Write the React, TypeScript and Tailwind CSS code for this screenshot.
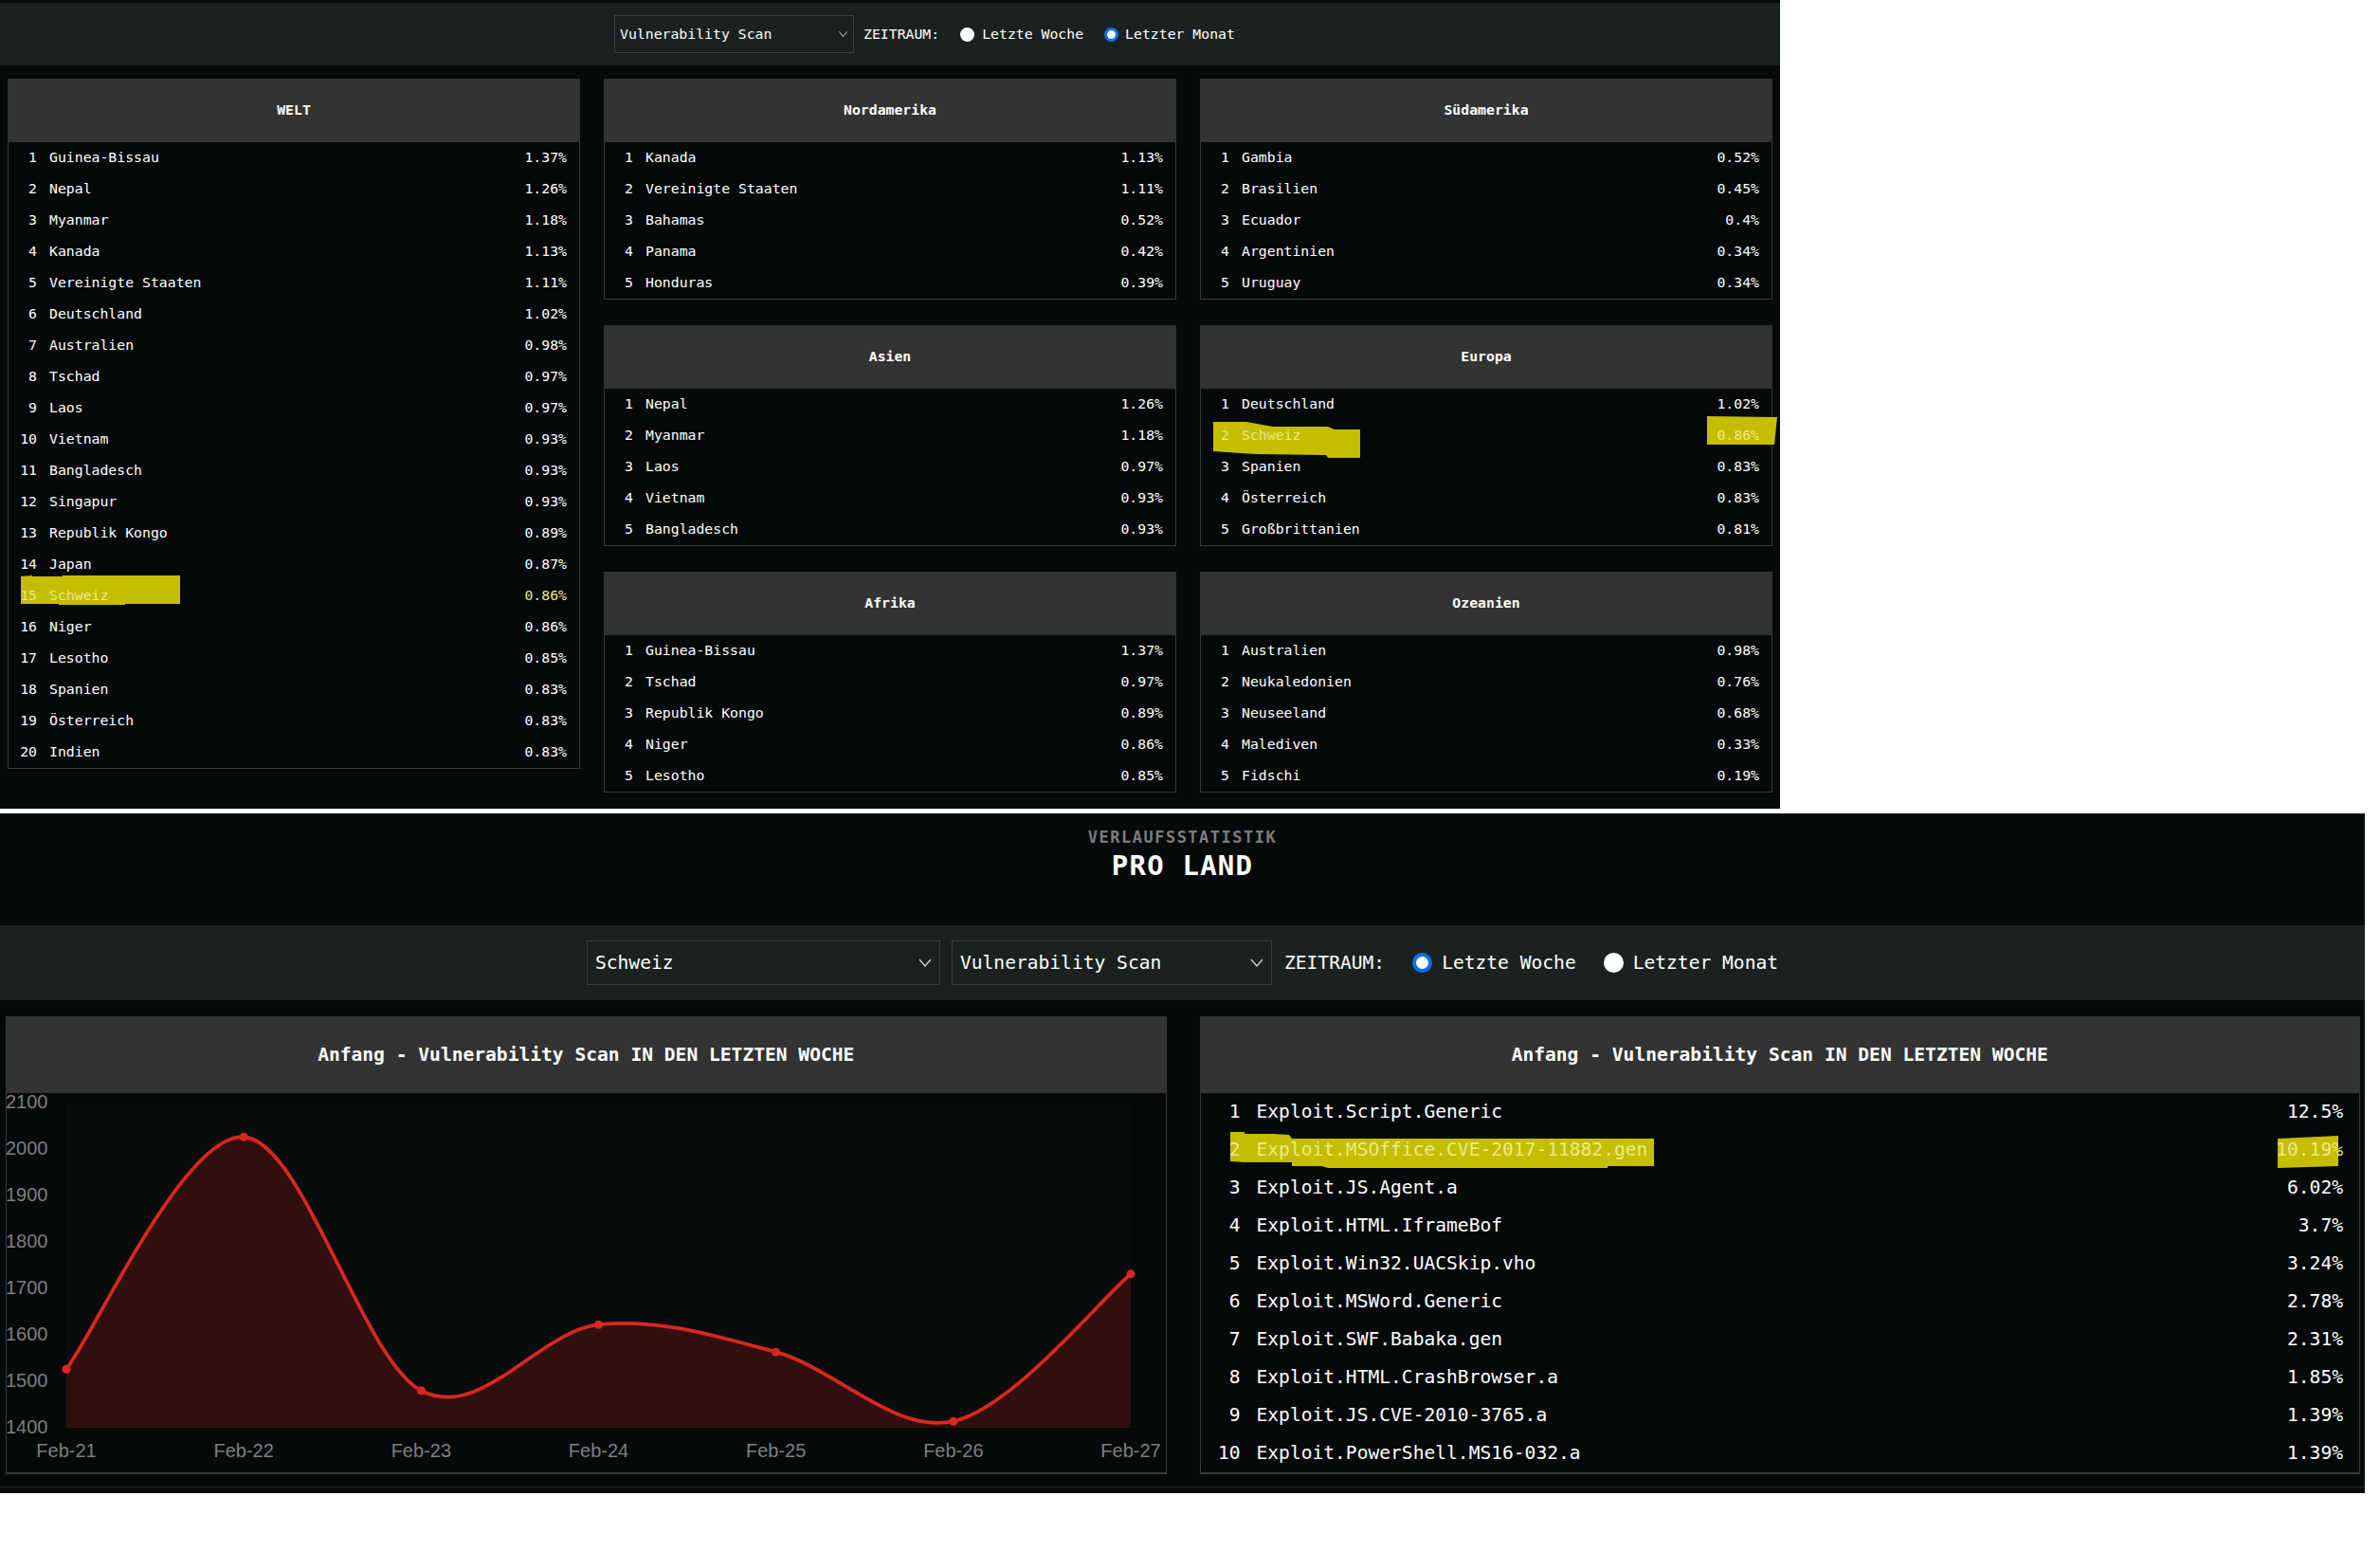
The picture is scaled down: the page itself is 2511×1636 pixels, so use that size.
import React from 'react';

type Row = [string, string];

const welt: Row[] = [
    ['Guinea-Bissau', '1.37%'],
    ['Nepal', '1.26%'],
    ['Myanmar', '1.18%'],
    ['Kanada', '1.13%'],
    ['Vereinigte Staaten', '1.11%'],
    ['Deutschland', '1.02%'],
    ['Australien', '0.98%'],
    ['Tschad', '0.97%'],
    ['Laos', '0.97%'],
    ['Vietnam', '0.93%'],
    ['Bangladesch', '0.93%'],
    ['Singapur', '0.93%'],
    ['Republik Kongo', '0.89%'],
    ['Japan', '0.87%'],
    ['Schweiz', '0.86%'],
    ['Niger', '0.86%'],
    ['Lesotho', '0.85%'],
    ['Spanien', '0.83%'],
    ['Österreich', '0.83%'],
    ['Indien', '0.83%'],
];

const columns: { title: string; rows: Row[] }[][] = [
    [
        { title: 'Nordamerika', rows: [['Kanada', '1.13%'], ['Vereinigte Staaten', '1.11%'], ['Bahamas', '0.52%'], ['Panama', '0.42%'], ['Honduras', '0.39%']] },
        { title: 'Asien', rows: [['Nepal', '1.26%'], ['Myanmar', '1.18%'], ['Laos', '0.97%'], ['Vietnam', '0.93%'], ['Bangladesch', '0.93%']] },
        { title: 'Afrika', rows: [['Guinea-Bissau', '1.37%'], ['Tschad', '0.97%'], ['Republik Kongo', '0.89%'], ['Niger', '0.86%'], ['Lesotho', '0.85%']] },
    ],
    [
        { title: 'Südamerika', rows: [['Gambia', '0.52%'], ['Brasilien', '0.45%'], ['Ecuador', '0.4%'], ['Argentinien', '0.34%'], ['Uruguay', '0.34%']] },
        { title: 'Europa', rows: [['Deutschland', '1.02%'], ['Schweiz', '0.86%'], ['Spanien', '0.83%'], ['Österreich', '0.83%'], ['Großbrittanien', '0.81%']] },
        { title: 'Ozeanien', rows: [['Australien', '0.98%'], ['Neukaledonien', '0.76%'], ['Neuseeland', '0.68%'], ['Malediven', '0.33%'], ['Fidschi', '0.19%']] },
    ],
];

const exploits: Row[] = [
    ['Exploit.Script.Generic', '12.5%'],
    ['Exploit.MSOffice.CVE-2017-11882.gen', '10.19%'],
    ['Exploit.JS.Agent.a', '6.02%'],
    ['Exploit.HTML.IframeBof', '3.7%'],
    ['Exploit.Win32.UACSkip.vho', '3.24%'],
    ['Exploit.MSWord.Generic', '2.78%'],
    ['Exploit.SWF.Babaka.gen', '2.31%'],
    ['Exploit.HTML.CrashBrowser.a', '1.85%'],
    ['Exploit.JS.CVE-2010-3765.a', '1.39%'],
    ['Exploit.PowerShell.MS16-032.a', '1.39%'],
];

const chartValues = [1526, 2026, 1480, 1622, 1563, 1414, 1731];
const chartLabels = ['Feb-21', 'Feb-22', 'Feb-23', 'Feb-24', 'Feb-25', 'Feb-26', 'Feb-27'];

const MARK = '#c5bd00';

const Chevron = ({ big }: { big?: boolean }) =>
    big ? (
        <svg width="14" height="9" viewBox="0 0 14 9">
            <polyline points="1,1 7,8 13,1" fill="none" stroke="#d8d8d8" strokeWidth="1.3" />
        </svg>
    ) : (
        <svg width="9" height="6" viewBox="0 0 9 6">
            <polyline points="0.5,0.5 4.5,5.5 8.5,0.5" fill="none" stroke="#d8d8d8" strokeWidth="1" />
        </svg>
    );

const Radio = ({ checked, big }: { checked: boolean; big?: boolean }) => {
    if (big) {
        return checked ? (
            <span className="inline-block w-[21px] h-[21px] rounded-full bg-white border-[4px] border-[#0b6ef2]" />
        ) : (
            <span className="inline-block w-[21px] h-[21px] rounded-full bg-white" />
        );
    }
    return checked ? (
        <span className="inline-block w-[15px] h-[15px] rounded-full bg-white border-[3px] border-[#0b6ef2]" />
    ) : (
        <span className="inline-block w-[15px] h-[15px] rounded-full bg-white" />
    );
};

// small card of the top dashboard
const RegionCard = ({ title, rows, mark }: { title: string; rows: Row[]; mark?: number }) => (
    <div className="border-x border-b border-[#3a3a3a] bg-[#050909]">
        <div className="h-[67px] -mx-px bg-[#333333] flex items-center justify-center font-bold text-white">{title}</div>
        {rows.map(([name, pct], i) => (
            <div key={name} className="relative h-[33px] flex items-center pr-[13px]">
                {mark === i && title === 'WELT' && (
                    <svg className="absolute left-[13px] top-[-5px] overflow-visible" width="168" height="32">
                        <polygon points="0,1 12,0 12,1 44,1 44,0 168,0 168,30 110,30 110,31 40,31 40,30 0,30" fill={MARK} />
                    </svg>
                )}
                {mark === i && title !== 'WELT' && (
                    <svg className="absolute left-0 top-0 overflow-visible" width="604" height="33">
                        <polygon points="13,2 48,2 76,7 134,7 141,10 168,10 168,40 134,40 132,37 59,36 42,35 13,33" fill={MARK} />
                        <polygon points="534,-4 608,-3 605,26 534,26" fill={MARK} />
                    </svg>
                )}
                <span className={mark === i ? 'relative w-[30px] text-right text-[#efe98a]' : 'relative w-[30px] text-right'}>{i + 1}</span>
                <span className={mark === i ? 'relative ml-[13px] flex-1 text-[#efe98a]' : 'relative ml-[13px] flex-1'}>{name}</span>
                <span className={mark === i ? 'relative text-[#efe98a]' : 'relative'}>{pct}</span>
            </div>
        ))}
    </div>
);

const Chart = () => {
    const pts = chartValues.map((v, i) => [63 + i * 187.17, 353 - (v - 1400) * 0.49]);
    let d = `M${pts[0][0]},${pts[0][1]}`;
    for (let i = 0; i < pts.length - 1; i++) {
        const p0 = pts[i - 1] ?? pts[i];
        const p1 = pts[i];
        const p2 = pts[i + 1];
        const p3 = pts[i + 2] ?? p2;
        const c1 = [p1[0] + (p2[0] - p0[0]) / 6, p1[1] + (p2[1] - p0[1]) / 6];
        const c2 = [p2[0] - (p3[0] - p1[0]) / 6, p2[1] - (p3[1] - p1[1]) / 6];
        d += ` C${c1[0]},${c1[1]} ${c2[0]},${c2[1]} ${p2[0]},${p2[1]}`;
    }
    const last = pts[pts.length - 1];
    const area = `${d} L${last[0]},353 L${pts[0][0]},353 Z`;

    return (
        <svg width="1222" height="400" className="block overflow-visible">
            <rect x="63" y="10" width="1123" height="343" fill="#080c0c" />
            {[2100, 2000, 1900, 1800, 1700, 1600, 1500, 1400].map((v, k) => (
                <text key={v} x="-1" y={11 + k * 49} dominantBaseline="middle" fontFamily="Liberation Sans, Arial, sans-serif" fontSize="20" fill="#7f7f7f">
                    {v}
                </text>
            ))}
            <path d={area} fill="#2f100e" />
            <path d={d} fill="none" stroke="#d8281e" strokeWidth="3.8" />
            {pts.map(([x, y], i) => (
                <circle key={i} cx={x} cy={y} r="4.5" fill="#d8281e" />
            ))}
            {chartLabels.map((l, i) => (
                <text key={l} x={63 + i * 187.17} y="379" textAnchor="middle" dominantBaseline="middle" fontFamily="Liberation Sans, Arial, sans-serif" fontSize="20" fill="#7f7f7f">
                    {l}
                </text>
            ))}
        </svg>
    );
};

export default function App() {
    return (
        <div className="w-[2511px] h-[1636px] bg-white font-['DejaVu_Sans_Mono',monospace] text-white">
            {/* top dashboard: world and continents */}
            <div className="w-[1878px] h-[853px] bg-[#060a0a] pt-[3px] text-[14.8px]">
                <div className="h-[66px] bg-[#1b211f] flex items-center pl-[648px]">
                    <div className="w-[253px] h-[40px] border border-[#3b3f3d] pl-[5px] pr-[6px] flex items-center justify-between">
                        <span>Vulnerability Scan</span>
                        <Chevron />
                    </div>
                    <span className="ml-[10px]">ZEITRAUM:</span>
                    <span className="ml-[22px] flex"><Radio checked={false} /></span>
                    <span className="ml-[8px]">Letzte Woche</span>
                    <span className="ml-[22px] flex"><Radio checked /></span>
                    <span className="ml-[7px]">Letzter Monat</span>
                </div>
                <div className="mt-[14px] px-[8px] flex gap-[25px]">
                    <div className="w-[604px]">
                        <RegionCard title="WELT" rows={welt} mark={14} />
                    </div>
                    {columns.map((col, c) => (
                        <div key={c} className="w-[604px] flex flex-col gap-[27px]">
                            {col.map(card => (
                                <RegionCard key={card.title} title={card.title} rows={card.rows} mark={card.title === 'Europa' ? 1 : undefined} />
                            ))}
                        </div>
                    ))}
                </div>
            </div>

            {/* bottom: history per country */}
            <div className="mt-[5px] w-[2495px] bg-[#060a0a] text-[19.6px]">
                <div className="h-[118px] pt-[15px] flex flex-col items-center">
                    <div className="text-[17px] leading-[20px] font-bold tracking-[1.5px] text-[#7d7d7d]">VERLAUFSSTATISTIK</div>
                    <div className="mt-[3px] text-[29px] leading-[34px] font-bold tracking-[1.2px]">PRO LAND</div>
                </div>
                <div className="h-[79px] bg-[#1b211f] flex items-center justify-center">
                    <div className="w-[373px] h-[47px] border border-[#3b3f3d] pl-[8px] pr-[8px] flex items-center justify-between">
                        <span>Schweiz</span>
                        <Chevron big />
                    </div>
                    <div className="ml-[12px] w-[338px] h-[47px] border border-[#3b3f3d] pl-[8px] pr-[8px] flex items-center justify-between">
                        <span>Vulnerability Scan</span>
                        <Chevron big />
                    </div>
                    <span className="ml-[13px]">ZEITRAUM:</span>
                    <span className="ml-[29px] flex"><Radio checked big /></span>
                    <span className="ml-[10px]">Letzte Woche</span>
                    <span className="ml-[29px] flex"><Radio checked={false} big /></span>
                    <span className="ml-[10px]">Letzter Monat</span>
                </div>
                <div className="mt-[17px] pl-[6px] pr-[5px] grid grid-cols-2 gap-x-[35px]">
                    <div className="border-x border-b-2 border-[#3a3a3a] bg-[#050909]">
                        <div className="h-[81px] -mx-px bg-[#333333] flex items-center justify-center font-bold">
                            Anfang - Vulnerability Scan IN DEN LETZTEN WOCHE
                        </div>
                        <Chart />
                    </div>
                    <div className="border-x border-b-2 border-[#3a3a3a] bg-[#050909]">
                        <div className="h-[81px] -mx-px bg-[#333333] flex items-center justify-center font-bold">
                            Anfang - Vulnerability Scan IN DEN LETZTEN WOCHE
                        </div>
                        {exploits.map(([name, pct], i) => (
                            <div key={name} className="relative h-[40px] flex items-center pr-[17px]">
                                {i === 1 && (
                                    <svg className="absolute left-0 top-0 overflow-visible" width="1222" height="40">
                                        <polygon
                                            points="31,1 46,1 46,3 76,3 93,4 96,8 478,8 478,37 429,37 429,39 134,39 127,37 96,37 96,33 46,33 31,32"
                                            fill={MARK}
                                        />
                                        <polygon points="1136,8 1200,5 1200,37 1136,39" fill={MARK} />
                                    </svg>
                                )}
                                <span className={i === 1 ? 'relative w-[42px] text-right text-[#efe98a]' : 'relative w-[42px] text-right'}>{i + 1}</span>
                                <span className={i === 1 ? 'relative ml-[17px] flex-1 text-[#efe98a]' : 'relative ml-[17px] flex-1'}>{name}</span>
                                <span className={i === 1 ? 'relative text-[#efe98a]' : 'relative'}>{pct}</span>
                            </div>
                        ))}
                    </div>
                </div>
                <div className="mt-[13px] h-px bg-[#232727]" />
                <div className="h-[6px]" />
            </div>
        </div>
    );
}
